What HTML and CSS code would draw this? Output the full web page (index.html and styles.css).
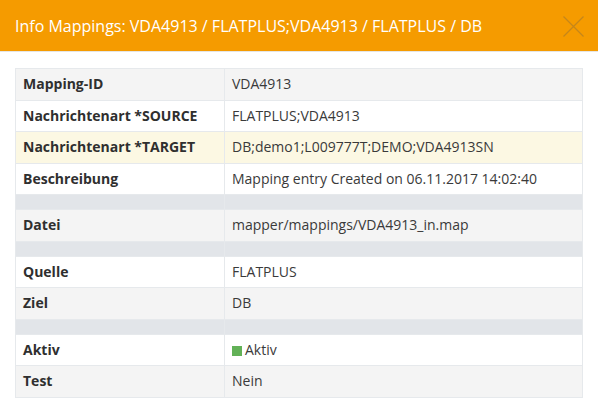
FILE: index.html
```html
<!DOCTYPE html>
<html>
<head>
<meta charset="utf-8">
<link rel="stylesheet" href="styles.css">
</head>
<body>
<div class="modal">
  <div class="modal-header">
    <h4 class="modal-title">Info Mappings: VDA4913 / FLATPLUS;VDA4913 / FLATPLUS / DB</h4>
    <button class="close" aria-label="Close">
      <svg width="21" height="21" viewBox="0 0 21 21"><path d="M0.5 0.5 L20.5 20.5 M20.5 0.5 L0.5 20.5" stroke="#c5861a" stroke-width="1.2" fill="none"/></svg>
    </button>
  </div>
  <div class="modal-body">
    <table class="info">
      <tbody>
        <tr class="gray"><th>Mapping-ID</th><td>VDA4913</td></tr>
        <tr><th>Nachrichtenart *SOURCE</th><td>FLATPLUS;VDA4913</td></tr>
        <tr class="warn"><th>Nachrichtenart *TARGET</th><td>DB;demo1;L009777T;DEMO;VDA4913SN</td></tr>
        <tr><th>Beschreibung</th><td>Mapping entry Created on 06.11.2017 14:02:40</td></tr>
        <tr class="sep"><th></th><td></td></tr>
        <tr class="gray"><th>Datei</th><td>mapper/mappings/VDA4913_in.map</td></tr>
        <tr class="sep"><th></th><td></td></tr>
        <tr><th>Quelle</th><td>FLATPLUS</td></tr>
        <tr class="gray"><th>Ziel</th><td>DB</td></tr>
        <tr class="sep"><th></th><td></td></tr>
        <tr><th>Aktiv</th><td><span class="dot"></span>Aktiv</td></tr>
        <tr class="gray"><th>Test</th><td>Nein</td></tr>
      </tbody>
    </table>
  </div>
</div>
</body>
</html>
```
FILE: styles.css
```css
html, body {
  margin: 0;
  padding: 0;
  background: #fff;
}
body {
  font-family: "Open Sans", "Noto Sans", sans-serif;
  font-size: 14px;
  color: #333;
}
.modal-header {
  height: 51px;
  background: #f59b00;
  border-bottom: 1px solid #e5e5e5;
  display: flex;
  align-items: center;
  justify-content: space-between;
  padding: 0 14px 0 15px;
}
.modal-title {
  margin: 0;
  font-size: 16px;
  font-weight: 400;
  color: #fff;
  line-height: 22px;
  margin-top: 1px;
}
.close {
  border: 0;
  background: none;
  padding: 0;
  width: 21px;
  height: 21px;
  margin-top: 1px;
  display: block;
}
.close svg { display: block; }
.modal-body {
  padding: 16px 15px 0 15px;
}
.info {
  width: 568px;
  border-collapse: collapse;
  border: 1px solid #e6e9ec;
}
.info th, .info td {
  border: 1px solid #e6e9ec;
  padding: 5px 7px;
  line-height: 20.5px;
  text-align: left;
  vertical-align: top;
  white-space: nowrap;
}
.info th {
  width: 194px;
  font-weight: 700;
  color: #2f2f2f;
  padding-left: 7px;
}
.info td {
  color: #3a3a3a;
  font-weight: 400;
}
.info tr.gray th, .info tr.gray td { background: #f4f4f4; }
.info tr.warn th, .info tr.warn td { background: #fcf8e3; }
.info tr.sep th, .info tr.sep td {
  background: #e2e5e9;
  padding: 0;
  height: 14px;
  line-height: 14px;
}
.dot {
  display: inline-block;
  width: 10px;
  height: 10px;
  background: #62b157;
  margin-right: 3px;
  vertical-align: -1px;
}
```
